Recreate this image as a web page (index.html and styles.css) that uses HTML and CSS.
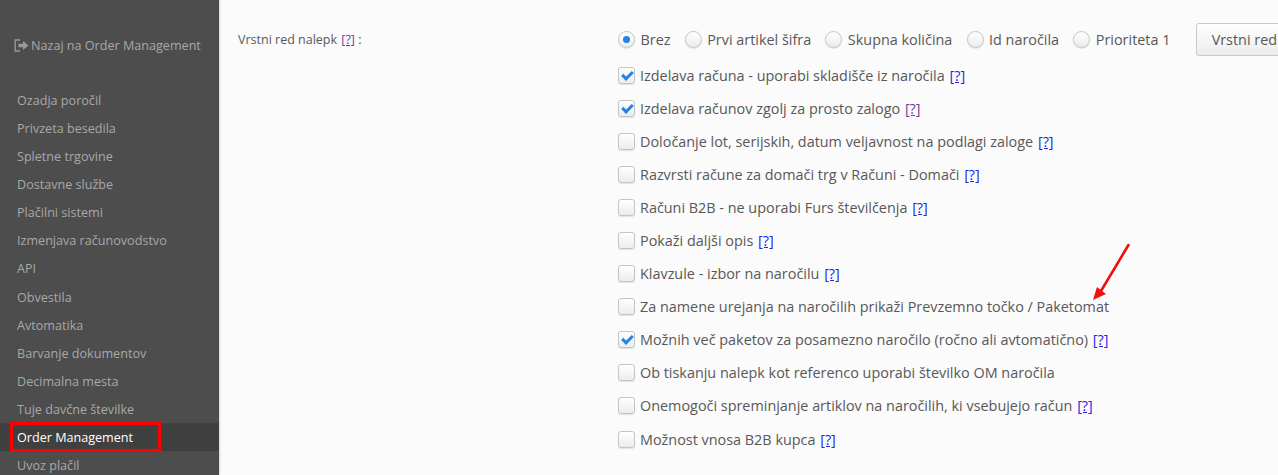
FILE: index.html
```html
<!DOCTYPE html>
<html>
<head>
  <title>Nastavitve</title>
  <link rel="stylesheet" href="styles.css">
</head>
<body>
  <div class="page">
    <div class="sidebar">
      <div class="back-link">
        <svg class="back-icon" width="15" height="13" viewBox="0 0 15 13">
          <path d="M6 1H1.2V12H6" fill="none" stroke="#9a9a9a" stroke-width="1.4"/>
          <path d="M4.5 4.8H9V2l5.5 4.5L9 11V8.2H4.5z" fill="#9a9a9a"/>
        </svg>
        Nazaj na Order Management
      </div>
      <ul class="menu">
        <li>Ozadja poročil</li>
        <li>Privzeta besedila</li>
        <li>Spletne trgovine</li>
        <li>Dostavne službe</li>
        <li>Plačilni sistemi</li>
        <li>Izmenjava računovodstvo</li>
        <li>API</li>
        <li>Obvestila</li>
        <li>Avtomatika</li>
        <li>Barvanje dokumentov</li>
        <li>Decimalna mesta</li>
        <li>Tuje davčne številke</li>
        <li class="active">Order Management</li>
        <li>Uvoz plačil</li>
      </ul>
    </div>

    <div class="content">
      <div class="field-label">Vrstni red nalepk <a class="help visited">[?]</a> :</div>
      <div class="fields">
        <div class="radio-row">
          <span class="radio checked"></span><span class="radio-text">Brez</span>
          <span class="radio"></span><span class="radio-text">Prvi artikel šifra</span>
          <span class="radio"></span><span class="radio-text">Skupna količina</span>
          <span class="radio"></span><span class="radio-text">Id naročila</span>
          <span class="radio"></span><span class="radio-text">Prioriteta 1</span>
          <button class="btn">Vrstni red</button>
        </div>
        <div class="check-row"><span class="check checked"></span>Izdelava računa - uporabi skladišče iz naročila&nbsp;<a class="help">[?]</a></div>
        <div class="check-row"><span class="check checked"></span>Izdelava računov zgolj za prosto zalogo&nbsp;<a class="help visited">[?]</a></div>
        <div class="check-row"><span class="check"></span>Določanje lot, serijskih, datum veljavnost na podlagi zaloge&nbsp;<a class="help">[?]</a></div>
        <div class="check-row"><span class="check"></span>Razvrsti račune za domači trg v Računi - Domači&nbsp;<a class="help">[?]</a></div>
        <div class="check-row"><span class="check"></span>Računi B2B - ne uporabi Furs številčenja&nbsp;<a class="help">[?]</a></div>
        <div class="check-row"><span class="check"></span>Pokaži daljši opis&nbsp;<a class="help">[?]</a></div>
        <div class="check-row"><span class="check"></span>Klavzule - izbor na naročilu&nbsp;<a class="help">[?]</a></div>
        <div class="check-row"><span class="check"></span>Za namene urejanja na naročilih prikaži Prevzemno točko / Paketomat</div>
        <div class="check-row"><span class="check checked"></span>Možnih več paketov za posamezno naročilo (ročno ali avtomatično)&nbsp;<a class="help">[?]</a></div>
        <div class="check-row"><span class="check"></span>Ob tiskanju nalepk kot referenco uporabi številko OM naročila</div>
        <div class="check-row"><span class="check"></span>Onemogoči spreminjanje artiklov na naročilih, ki vsebujejo račun&nbsp;<a class="help">[?]</a></div>
        <div class="check-row"><span class="check"></span>Možnost vnosa B2B kupca&nbsp;<a class="help">[?]</a></div>
      </div>
    </div>
  </div>

  <!-- annotations on top of the screenshot -->
  <div class="red-box"></div>
  <svg class="red-arrow" width="44" height="64" viewBox="0 0 44 64">
    <path d="M36.5 3L9 49" stroke="#f00f0f" stroke-width="2.6" fill="none" stroke-linecap="round"/>
    <path d="M1 58L5 45L14 52z" fill="#f00f0f"/>
  </svg>
</body>
</html>
```

FILE: styles.css
```css
html, body {
  margin: 0;
  height: 100%;
  overflow: hidden;
}

body {
  position: relative;
  font-family: "Open Sans", sans-serif;
  font-size: 14.4px;
  color: #585858;
  background-color: #fbfbfb;
}

.page {
  display: flex;
  height: 475px;
  overflow: hidden;
}

.sidebar {
  width: 219px;
  flex-shrink: 0;
  background-color: #4d4d4d;
  box-shadow: 1px 0 2px rgba(0, 0, 0, 0.15);
  color: #a8a8a8;
  font-size: 12.6px;
}

.back-link {
  display: flex;
  align-items: center;
  gap: 2px;
  height: 18px;
  margin: 36px 0 0 14px;
}

.back-icon {
  flex-shrink: 0;
}

.menu {
  list-style: none;
  margin: 32px 0 0;
  padding: 0;
}

.menu li {
  height: 28.08px;
  line-height: 30px;
  padding-left: 17px;
}

.menu li.active {
  background-color: #404040;
  color: #fff;
  font-weight: 500;
}

.content {
  flex: 1;
  display: flex;
  min-width: 0;
  padding: 23px 0 0 19px;
}

.field-label {
  width: 380px;
  flex-shrink: 0;
  font-size: 12.5px;
  line-height: 33px;
}

.fields {
  white-space: nowrap;
}

.radio-row {
  display: flex;
  align-items: center;
  height: 32px;
  margin-bottom: 3.5px;
}

.radio {
  width: 15px;
  height: 15px;
  border: 1px solid #c4c4c4;
  border-radius: 50%;
  background: linear-gradient(#fff, #ececec);
  box-shadow: 0 1px 1px rgba(0, 0, 0, 0.1);
  margin-right: 5.5px;
  position: relative;
}

.radio.checked::after {
  content: "";
  position: absolute;
  left: 4px;
  top: 4px;
  width: 7px;
  height: 7px;
  border-radius: 50%;
  background-color: #2383e2;
}

.radio-text {
  margin-right: 14.2px;
}

.btn {
  margin-left: 11px;
  width: 120px;
  height: 33px;
  padding: 0 0 0 15px;
  text-align: left;
  font-family: inherit;
  font-size: 14.4px;
  color: #585858;
  border: 1px solid #c8c8c8;
  border-radius: 3px;
  background: linear-gradient(#fff, #ececec);
}

.check-row {
  display: flex;
  align-items: center;
  height: 33.1px;
}

.check {
  position: relative;
  width: 15px;
  height: 15px;
  border: 1px solid #c4c4c4;
  border-radius: 3px;
  background: linear-gradient(#fff, #ececec);
  box-shadow: 0 1px 1px rgba(0, 0, 0, 0.1);
  margin-right: 5px;
  flex-shrink: 0;
}

.check.checked::after {
  content: "";
  position: absolute;
  left: 5px;
  top: 1px;
  width: 4px;
  height: 8px;
  border: solid #2383e2;
  border-width: 0 3px 3px 0;
  transform: rotate(45deg);
}

.help {
  margin-left: 1px;
  color: #2424ee;
  text-decoration: underline;
}

.help.visited {
  color: #6b3fa0;
}

.red-box {
  position: absolute;
  left: 10px;
  top: 422px;
  width: 151px;
  height: 30px;
  box-sizing: border-box;
  border: 3px solid #f00;
}

.red-arrow {
  position: absolute;
  left: 1092px;
  top: 242px;
}
```
